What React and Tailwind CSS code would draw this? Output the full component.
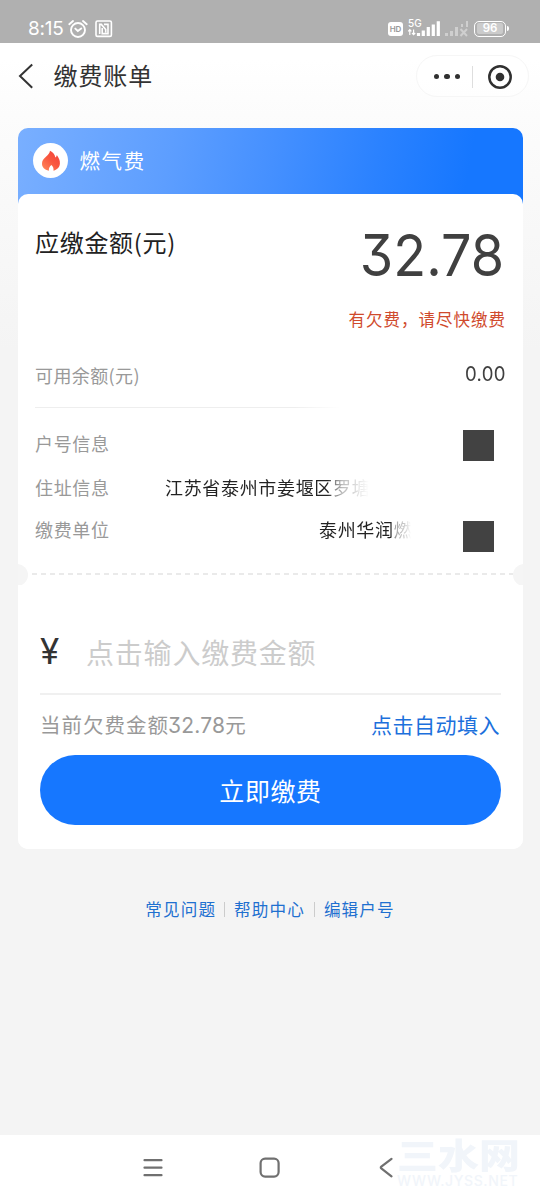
import React from "react";

const CJK = "font-['Noto_Sans_CJK_SC',sans-serif]";
const NUM = "font-['Inter','Noto_Sans_CJK_SC',sans-serif] [font-feature-settings:'cv09']";

function StatusBar() {
  return (
    <header className="flex h-[43px] items-start justify-between bg-[#b0b0b0] pl-[28px] pr-[31px] pt-[17px] text-white">
      <div className="flex h-[23px] items-center">
        <span className="w-[39px] whitespace-nowrap font-['Inter',sans-serif] text-[19px] leading-[23px] tracking-[-0.2px]">8:15</span>
        <svg className="ml-[1px]" width="20" height="20" viewBox="0 0 20 20" fill="none" stroke="white" strokeWidth="1.9" strokeLinecap="round">
          <circle cx="10" cy="11" r="7" />
          <path d="M1.3 5.2 5 2M18.7 5.2 15 2M7.3 9.6l2.5 2.4 3.4-2.6" />
        </svg>
        <svg className="ml-[7px]" width="18" height="18" viewBox="0 0 18 18" fill="none" stroke="white" strokeWidth="1.6">
          <rect x="1" y="1" width="15.4" height="15.4" rx="1.5" />
          <path d="M4.7 14V4.4h1.600l4.400 5.200v3M7.200 8v5.600h5.800V4.400H9" />
        </svg>
      </div>
      <div className="flex h-[23px] items-center">
        <span className="mr-[3px] flex h-[14px] w-[15px] items-center justify-center rounded-[3px] bg-white font-['Inter',sans-serif] text-[8px] font-semibold leading-none text-[#999]">HD</span>
        <svg className="-mt-px ml-[1px]" width="66" height="22" viewBox="0 0 66 22">
          <text x="1" y="9.500" fill="white" fontFamily="Inter, sans-serif" fontSize="10" fontWeight="500">5G</text>
          <path d="M2.800 18v-5M1.200 14.400l1.600-1.700 1.600 1.700M6.600 12.500v5M5 16l1.600 1.700L8.200 16" stroke="white" fill="none" strokeWidth="1.200" />
          <path d="M11.500 19v-3M16.300 19v-5.500M21.300 19v-9M26.300 19V7.500M31.300 19V4.300" stroke="white" strokeWidth="3.200" />
          <path d="M39.500 19v-3M44.500 19v-5M49.500 19v-9" stroke="#cfcfcf" strokeWidth="3" />
          <path d="m53.500 12 6.500 7m0-7-6.500 7M55 10V7M60 10V4" stroke="#cfcfcf" strokeWidth="2" />
        </svg>
        <span className="ml-[1px] flex h-[16px] w-[32px] items-center justify-center rounded-[5px] border-[1.5px] border-white">
          <span className="flex h-[11px] w-[26px] items-center justify-center rounded-[2px] bg-[#cbcbcb] font-['Inter',sans-serif] text-[11.500px] font-semibold leading-none">96</span>
        </span>
        <span className="ml-[1px] h-[5px] w-[2px] rounded-r bg-white" />
      </div>
    </header>
  );
}

function TitleBar() {
  return (
    <div className="flex h-[85px] items-start justify-between pl-[18px] pr-[11px] pt-[12px]">
      <div className="flex h-[42px] items-center">
        <svg width="16" height="26" viewBox="0 0 16 26" fill="none" stroke="#333" strokeWidth="2">
          <path d="M14.2 1.5 2 13l12.2 11.8" />
        </svg>
        <h1 className="-mt-[3px] ml-[19.500px] text-[24px] leading-[40px] tracking-[0.900px] text-[#333]">缴费账单</h1>
      </div>
      <div className="flex h-[42px] w-[113px] items-center rounded-full border border-[#f6f6f6] bg-white/60 pt-px">
        <div className="flex h-[22px] w-[56px] items-center justify-center gap-[5px] border-r border-[#dedede] pl-[5px]">
          <i className="size-[5.500px] rounded-full bg-[#303030]" />
          <i className="size-[5.500px] rounded-full bg-[#303030]" />
          <i className="size-[5.500px] rounded-full bg-[#303030]" />
        </div>
        <svg className="ml-[14px]" width="26" height="26" viewBox="0 0 26 26">
          <circle cx="13" cy="13" r="10.7" fill="none" stroke="#303030" strokeWidth="2.500" />
          <circle cx="13" cy="13" r="4.3" fill="#303030" />
        </svg>
      </div>
    </div>
  );
}

function Flame() {
  return (
    <svg width="20" height="22" viewBox="0 0 20 22">
      <defs>
        <linearGradient id="flame" x1="1" y1="0" x2="0.2" y2="1">
          <stop offset="0" stopColor="#f2403a" />
          <stop offset="0.55" stopColor="#f9573f" />
          <stop offset="1" stopColor="#ff8358" />
        </linearGradient>
      </defs>
      <path fill="url(#flame)" d="M9 .8c3 1.500 4.800 3.700 5.300 6.700.9-.7 1.400-1.400 1.500-2.500C17.900 8 19.100 10.500 18.900 13.600c-.2 3.300-2.300 6.200-6.400 7.200.3-2.200-.4-4.200-2.100-5.700-2 1.600-2.800 3.500-2.500 5.700C3.500 19.800 1.100 17.300 1 14c-.1-3 1.500-4.900 3.700-6.900C7 5 8.700 3.300 9 .8Z" />
    </svg>
  );
}

function Divider() {
  return (
    <div className="flex h-[22px] items-center justify-between overflow-hidden">
      <i className="-ml-[12px] mt-[2px] size-[22px] shrink-0 rounded-full bg-[#f5f5f5]" />
      <svg className="h-[2px] flex-1" preserveAspectRatio="none">
        <line x1="4" y1="1" x2="485" y2="1" stroke="#e3e3e3" strokeWidth="1.600" strokeDasharray="5 4" />
      </svg>
      <i className="-mr-[12px] mt-[2px] size-[22px] shrink-0 rounded-full bg-[#f5f5f5]" />
    </div>
  );
}

function Bill() {
  return (
    <main className="mx-[18px] h-[721px] w-[505px] rounded-[10px] bg-white bg-[linear-gradient(100deg,#79afff_0%,#5d9eff_30%,#4590ff_50%,#2b82ff_70%,#1677ff_88%)] bg-[length:100%_90px] bg-no-repeat">
      <div className="flex h-[66px] items-center pl-[15px]">
        <span className="-mt-px flex size-[35px] items-center justify-center rounded-full bg-white"><Flame /></span>
        <span className="-mt-[3px] ml-[11.500px] text-[20.500px] leading-[30px] tracking-[1.600px] text-white">燃气费</span>
      </div>
      <div className="h-[655px] rounded-[10px] bg-white">
        <section className="h-[369px] pl-[17px] pr-[17px] pt-[29px]">
          <div className="flex h-[80px] items-start justify-between">
            <h2 className="text-[24px] leading-[38px] tracking-[0.700px] text-[#222]">应缴金额(元)</h2>
            <span className={`${NUM} mr-[2px] mt-[-3px] origin-right scale-x-[0.93] text-[58px] leading-[71px] text-[#404040]`}>32.78</span>
          </div>
          <p className="h-[32px] text-right text-[16.500px] leading-[32px] tracking-[1px] text-[#d04a2c]">有欠费，请尽快缴费</p>
          <div className="mt-[24px] flex h-[32px] items-center justify-between">
            <span className="text-[18px] tracking-[0.400px] text-[#999]">可用余额(元)</span>
            <span className={`${NUM} -mt-[2px] origin-right scale-x-[0.93] text-[20px] tracking-[0.300px] text-[#404040]`}>0.00</span>
          </div>
          <div className="mt-[16px] h-px w-[305px] bg-[linear-gradient(90deg,#eee_85%,transparent)]" />
          <div className="mt-[21px] flex h-[32px] items-center justify-between pr-[12.500px]">
            <span className="-mt-[3px] text-[18px] tracking-[0.670px] text-[#999]">户号信息</span>
            <i className="size-[31px] bg-[#424242]" />
          </div>
          <div className="mt-[10px] flex h-[32px] items-center">
            <span className="w-[130px] text-[18px] tracking-[0.670px] text-[#999]">住址信息</span>
            <span className="w-[206px] overflow-hidden whitespace-nowrap bg-[linear-gradient(90deg,#222_79%,#777_82%,#bbb_86%,#ddd_93%,transparent_99%)] bg-clip-text text-[18px] tracking-[0.670px] text-transparent">江苏省泰州市姜堰区罗塘</span>
          </div>
          <div className="mt-[10px] flex h-[32px] items-center">
            <span className="w-[284px] text-[18px] tracking-[0.670px] text-[#999]">缴费单位</span>
            <span className="w-[93px] overflow-hidden whitespace-nowrap bg-[linear-gradient(90deg,#222_78%,#aaa_83%,#ccc_92%,transparent_99%)] bg-clip-text text-[18px] tracking-[0.670px] text-transparent">泰州华润燃</span>
            <i className="ml-[50.500px] mt-[15px] size-[31px] bg-[#424242]" />
          </div>
        </section>
        <Divider />
        <section className="px-[22px] pt-[45px]">
          <div className="flex h-[65px] items-start border-b-2 border-[#f0f0f0]">
            <span className={`${NUM} -mt-px w-[46px] text-[35px] leading-[44px] text-[#333]`}>¥</span>
            <span className="text-[28px] leading-[44px] tracking-[0.800px] text-[#ccc]">点击输入缴费金额</span>
          </div>
          <div className="flex h-[60px] items-center justify-between">
            <span className="flex items-baseline text-[20.500px] tracking-[1px] text-[#999]">
              当前欠费金额
              <span className={`${NUM} -ml-px text-[21px] tracking-[0.200px]`}>32.78</span>
              元
            </span>
            <a className="-mr-px -mt-px pr-[2px] text-[21px] tracking-[0.500px] text-[#1c70dc]">点击自动填入</a>
          </div>
          <button className="flex h-[70px] w-[461px] items-center justify-center rounded-full bg-[#1677ff] pt-px text-[25px] tracking-[0.600px] text-white">立即缴费</button>
        </section>
      </div>
    </main>
  );
}

function Links() {
  return (
    <nav className="mt-[47px] flex h-[26px] items-center justify-center text-[16.600px] tracking-[1.100px] text-[#1f70d0]">
      <a>常见问题</a>
      <i className="ml-[8px] mr-[9px] h-[15px] w-px bg-[#ccc]" />
      <a>帮助中心</a>
      <i className="ml-[9px] mr-[9px] h-[15px] w-px bg-[#ccc]" />
      <a>编辑户号</a>
    </nav>
  );
}

function NavBar() {
  return (
    <footer className="relative mt-auto flex h-[65px] items-center bg-white pl-[143px]">
      <svg width="20" height="20" viewBox="0 0 20 20" stroke="#707070" strokeWidth="2.200" strokeLinecap="round">
        <path d="M1.500 2.200h17M1.500 9.700h17M1.500 17.200h17" />
      </svg>
      <svg className="ml-[96px]" width="22" height="22" viewBox="0 0 22 22" fill="none" stroke="#707070" strokeWidth="2.200">
        <rect x="1.600" y="1.600" width="18" height="18" rx="4.500" />
      </svg>
      <svg className="ml-[98px]" width="14" height="22" viewBox="0 0 14 22" fill="none" stroke="#707070" strokeWidth="2.200" strokeLinecap="round" strokeLinejoin="round">
        <path d="M12.500 1.800 2.300 9.700q-1 .8 0 1.600l10.200 8" />
      </svg>
      <div className="absolute left-[397px] top-[2px] flex flex-col whitespace-nowrap text-[#f1f5fa]">
        <span className="h-[38px] origin-top scale-y-[0.860] text-[41px] font-black leading-[38px]">三水网</span>
        <span className="font-['Inter',sans-serif] text-[14px] font-medium leading-[12px] tracking-[0.600px]">WWW.JYSS.NET</span>
      </div>
    </footer>
  );
}

export default function App() {
  return (
    <div className={`${CJK} flex h-[1200px] w-[540px] flex-col overflow-hidden bg-[#f4f4f4] bg-[linear-gradient(180deg,#fff_60px,#fcfcfc_115px,#f4f4f4_350px)]`}>
      <StatusBar />
      <TitleBar />
      <Bill />
      <Links />
      <NavBar />
    </div>
  );
}
